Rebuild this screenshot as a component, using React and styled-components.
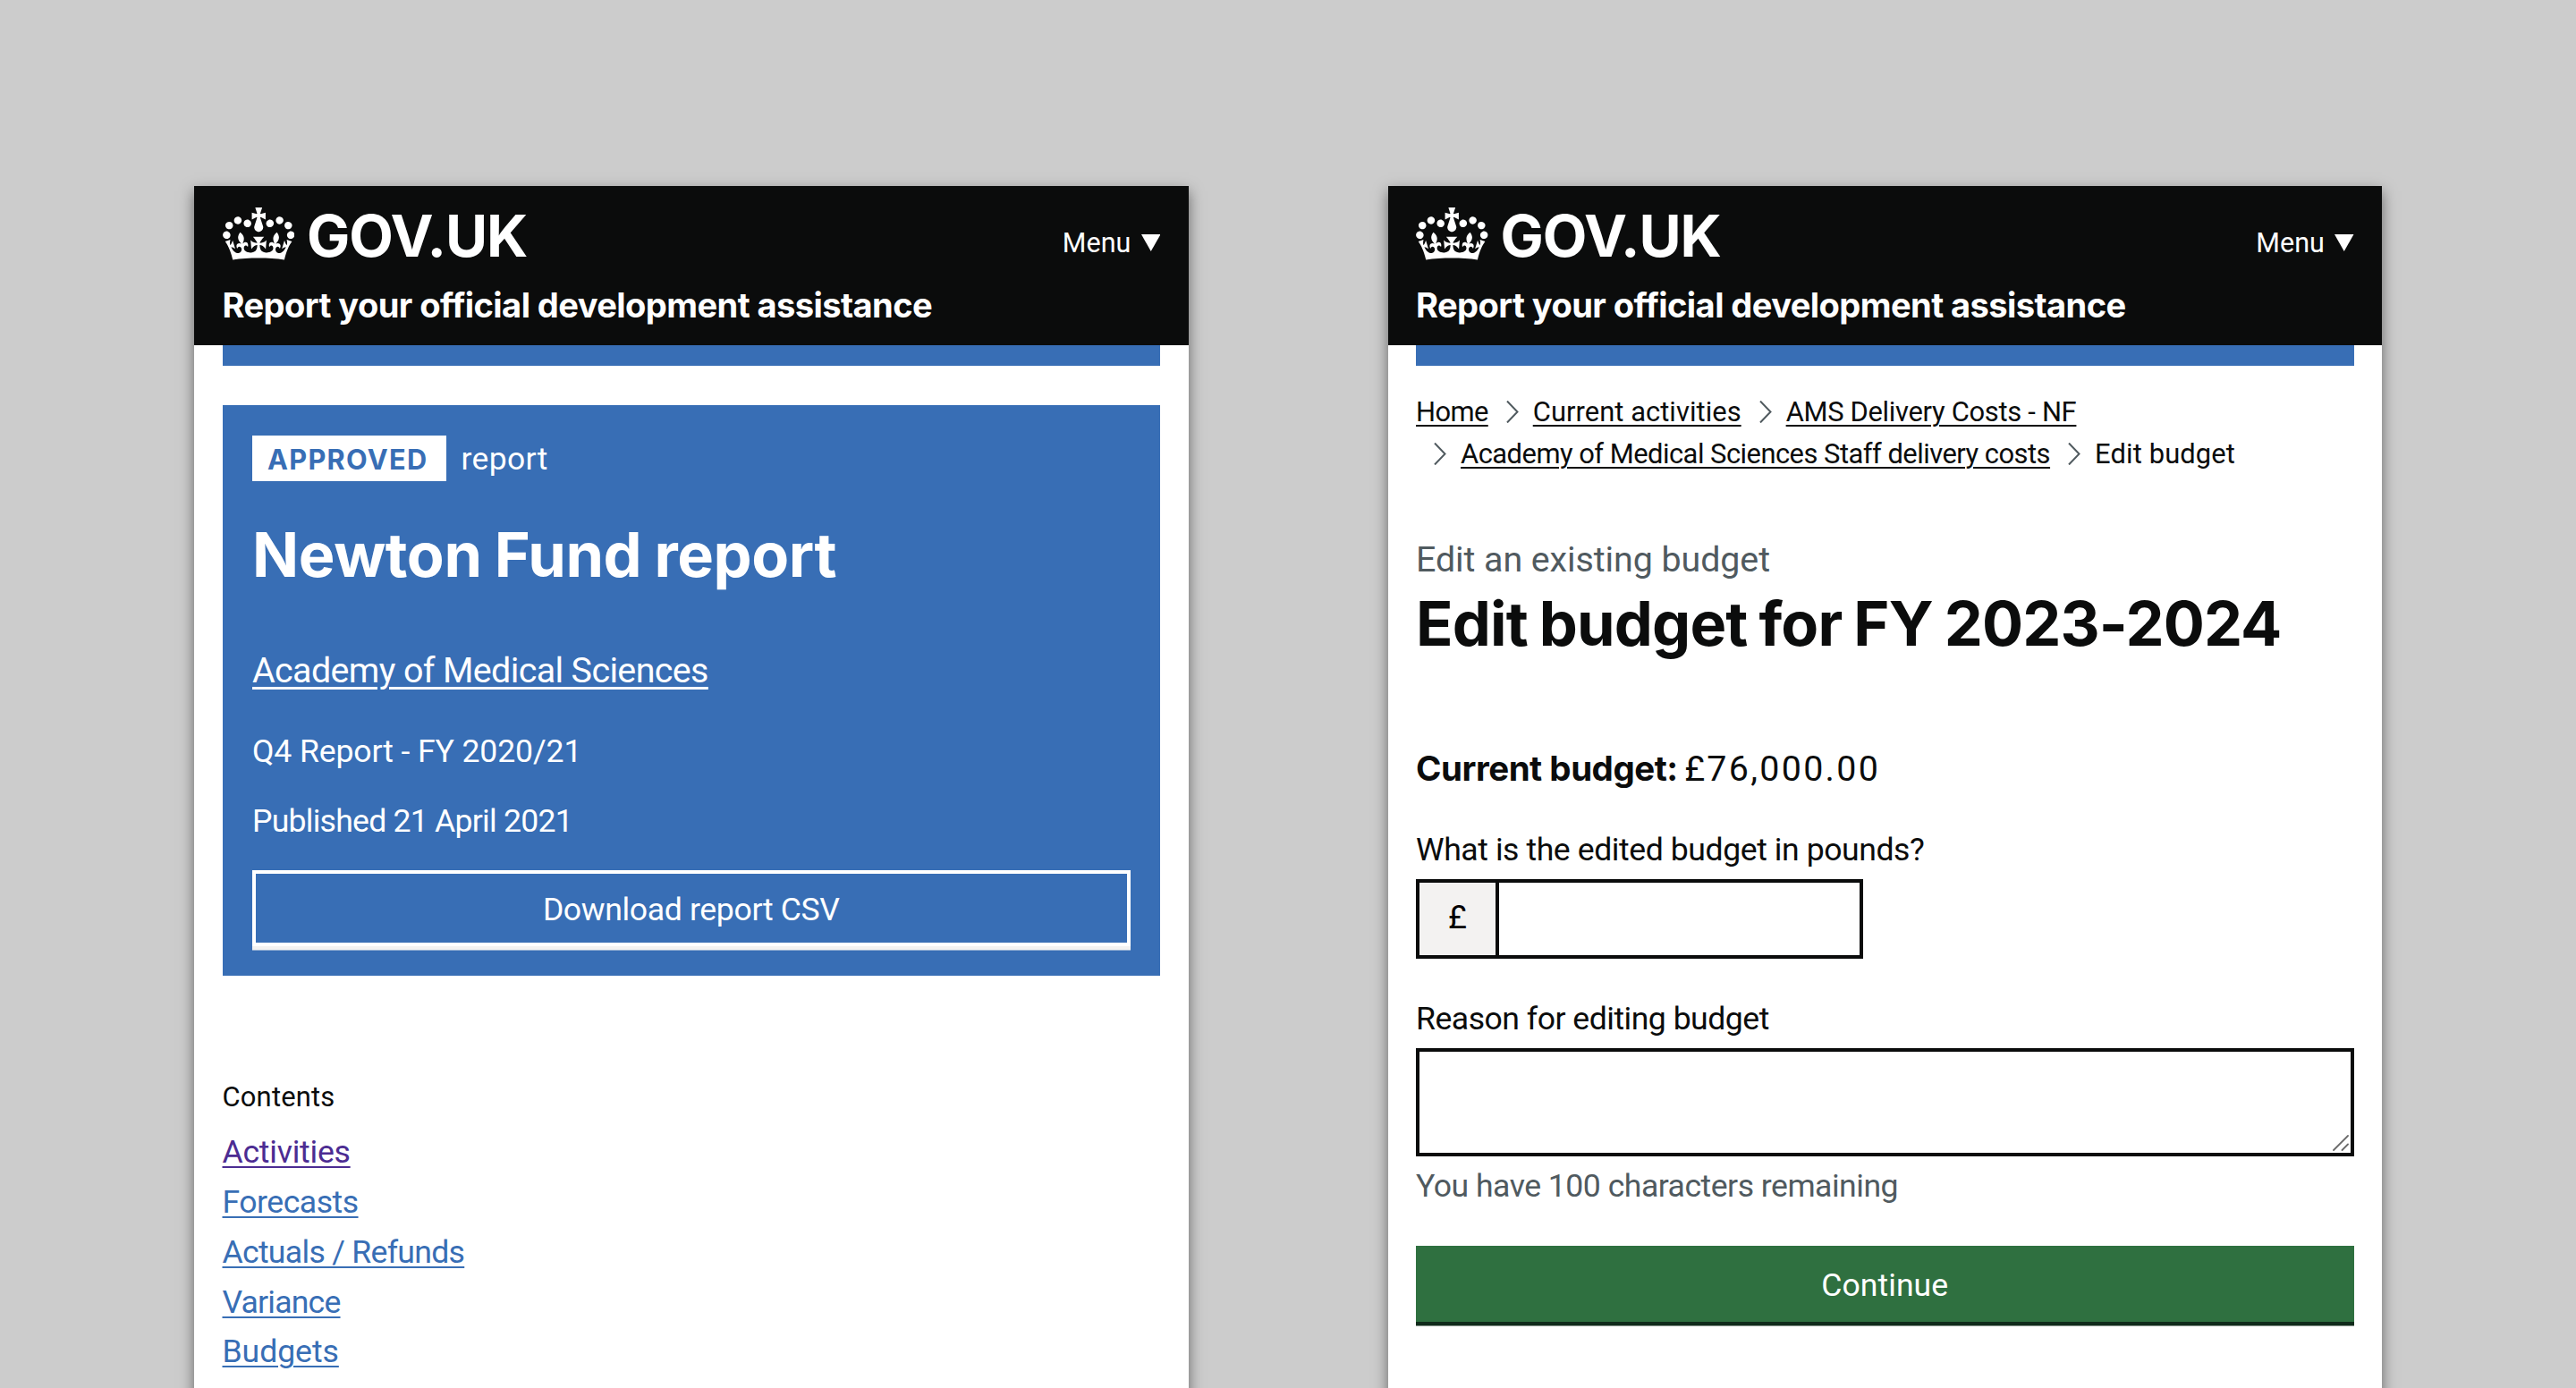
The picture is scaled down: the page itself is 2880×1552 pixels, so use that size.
import React from "react";
import styled, { createGlobalStyle } from "styled-components";

const ink = "#0b0c0c";
const blue = "#386eb5";
const muted = "#505a5f";
const regular = `"Roboto", "Liberation Sans", sans-serif`;
const bold = `"Inter", "Liberation Sans", sans-serif`;

const GlobalStyle = createGlobalStyle`
  *, *::before, *::after { box-sizing: border-box; }
  body {
    margin: 0;
    background: #cccccc;
    color: ${ink};
    font-family: ${regular};
    -webkit-font-smoothing: antialiased;
  }
  h1, p, ul, ol { margin: 0; padding: 0; font-weight: 400; }
  ul, ol { list-style: none; }
`;

const Stage = styled.main`
  display: flex;
  gap: 223px;
  width: 2880px;
  height: 1552px;
  padding: 208px 0 0 217px;
  overflow: hidden;
`;

const Screen = styled.section`
  flex: none;
  width: 1111.5px;
  height: 1600px;
  background: #ffffff;
  box-shadow: 0 6px 15px rgba(0, 0, 0, 0.5);
`;

const Header = styled.header`
  height: 178.4px;
  padding: 23px 31.5px 0;
  background: ${ink};
  color: #ffffff;
`;

const HeaderTop = styled.div`
  display: flex;
  align-items: flex-start;
  height: 59px;
`;

const Crown = styled.svg`
  display: block;
  width: 80.5px;
  height: 59px;
  margin-top: 0.5px;
  fill: currentColor;
`;

const Wordmark = styled.span`
  margin: 1px auto 0 14px;
  font: 700 64.4px/64px ${bold};
  letter-spacing: -0.95px;
`;

const MenuButton = styled.div`
  display: flex;
  align-items: center;
  gap: 11px;
  margin-top: 20.5px;
  font-size: 30.5px;
  line-height: 40px;
  letter-spacing: 0.05px;
`;

const Arrow = styled.svg`
  width: 21.5px;
  height: 19px;
  fill: currentColor;
`;

const ServiceName = styled.p`
  margin-top: 27px;
  font: 700 38.1px/48px ${bold};
  letter-spacing: -0.58px;
  white-space: nowrap;
`;

const Body = styled.div`
  padding: 0 31.5px;
`;

const PhaseStrip = styled.div`
  height: 22.2px;
  background: ${blue};
`;

const Card = styled.article`
  height: 638.2px;
  margin-top: 44.6px;
  padding: 33.5px;
  background: ${blue};
  color: #ffffff;
`;

const StatusRow = styled.div`
  display: flex;
  align-items: baseline;
  gap: 17px;
  height: 51.8px;
  font-size: 35.4px;
  letter-spacing: 0.4px;
`;

const Tag = styled.strong`
  width: 216.5px;
  height: 51.8px;
  padding-left: 17px;
  background: #ffffff;
  color: ${blue};
  font: 700 30.7px/54px ${bold};
  letter-spacing: 1.3px;
`;

const Title = styled.h1`
  margin-top: ${(p) => p.$top}px;
  font: 700 68.4px/80px ${bold};
  letter-spacing: ${(p) => p.$track}px;
  word-spacing: ${(p) => p.$word || 0}px;
  white-space: nowrap;
`;

const Text = styled.p`
  margin-top: ${(p) => p.$top}px;
  font-size: ${(p) => (p.$large ? 39.4 : p.$small ? 30.9 : 35.6)}px;
  line-height: ${(p) => (p.$large ? 52 : p.$small ? 40 : 44)}px;
  letter-spacing: ${(p) => p.$track || 0}px;
  color: ${(p) => (p.$muted ? muted : "inherit")};
  white-space: nowrap;
`;

const Link = styled.a`
  color: ${(p) => p.$color || "inherit"};
  letter-spacing: ${(p) => p.$track || 0}px;
  text-decoration: underline;
  text-decoration-thickness: ${(p) => (p.$large ? 3 : 2.4)}px;
  text-underline-offset: ${(p) => (p.$large ? 5 : 4)}px;
`;

const Button = styled.div`
  display: flex;
  align-items: center;
  justify-content: center;
  height: 85px;
  margin-top: ${(p) => p.$top}px;
  padding-top: 3px;
  border: ${(p) => (p.$outline ? "4.2px solid #ffffff" : "0")};
  background: ${(p) => (p.$outline ? blue : "#2f7040")};
  box-shadow: 0 4.5px 0 ${(p) => (p.$outline ? "#f3f2f1" : "#102b1b")};
  color: #ffffff;
  font-size: 35.6px;
  letter-spacing: ${(p) => p.$track}px;
`;

const ContentsList = styled.ul`
  margin-top: 14.2px;
  font-size: 35.6px;
  line-height: 55.8px;
`;

const Breadcrumbs = styled.ol`
  display: flex;
  flex-wrap: wrap;
  margin-top: 28.8px;
  font-size: 30.9px;
  line-height: 47px;
`;

const Crumb = styled.li`
  display: flex;
  align-items: center;
  gap: 16px;
  letter-spacing: ${(p) => p.$track}px;
  white-space: nowrap;

  & + & { margin-left: 20px; }
`;

const Chevron = styled.svg`
  width: 14px;
  height: 25px;
  fill: none;
  stroke: ${muted};
  stroke-width: 2;
`;

const Budget = styled.div`
  display: flex;
  align-items: baseline;
  gap: 7.5px;
  margin-top: 96.4px;
  font-size: 39.4px;
  line-height: 52px;
  letter-spacing: 2.3px;
`;

const BudgetLabel = styled.strong`
  font: 700 38.5px/52px ${bold};
  letter-spacing: -0.49px;
`;

const MoneyInput = styled.div`
  display: flex;
  width: 499.7px;
  height: 88.7px;
  margin-top: 11.2px;
  border: 4.3px solid ${ink};
`;

const Prefix = styled.span`
  display: flex;
  align-items: center;
  justify-content: center;
  width: 89px;
  padding-bottom: 1.5px;
  border-right: 4.3px solid ${ink};
  background: #f3f2f1;
  color: #000000;
  font-size: 36px;
`;

const TextBox = styled.div`
  display: flex;
  align-items: flex-end;
  justify-content: flex-end;
  height: 120.6px;
  margin-top: 10.8px;
  padding: 2px;
  border: 4.3px solid ${ink};
`;

const Grip = styled.svg`
  width: 18px;
  height: 18px;
  fill: none;
  stroke: #6b6b6b;
  stroke-width: 1.8;
  stroke-linecap: round;
`;

function SiteHeader() {
  return (
    <Header>
      <HeaderTop>
        <Crown viewBox="0 0 132 97">
          <path d="M25 30.2c3.5 1.5 7.7-.2 9.1-3.7 1.5-3.6-.2-7.8-3.9-9.2-3.6-1.4-7.6.3-9.1 3.9-1.4 3.5.3 7.5 3.9 9zM9 39.5c3.6 1.5 7.8-.2 9.2-3.7 1.5-3.6-.2-7.8-3.9-9.1-3.6-1.5-7.6.2-9.1 3.8-1.4 3.5.3 7.5 3.8 9zM4.4 57.2c3.5 1.5 7.7-.2 9.1-3.8 1.5-3.6-.2-7.7-3.9-9.1-3.5-1.5-7.6.3-9.1 3.8-1.4 3.5.3 7.6 3.9 9.1zm38.3-21.4c3.5 1.5 7.7-.2 9.1-3.8 1.5-3.6-.2-7.7-3.9-9.1-3.6-1.5-7.6.3-9.1 3.8-1.3 3.6.4 7.7 3.9 9.1zm64.4-5.6c-3.6 1.5-7.8-.2-9.1-3.7-1.5-3.6.2-7.8 3.8-9.2 3.6-1.4 7.7.3 9.2 3.9 1.3 3.5-.4 7.5-3.9 9zm15.9 9.3c-3.6 1.5-7.7-.2-9.1-3.7-1.5-3.6.2-7.8 3.7-9.1 3.6-1.5 7.7.2 9.2 3.8 1.5 3.5-.3 7.5-3.8 9zm4.7 17.7c-3.6 1.5-7.8-.2-9.2-3.8-1.5-3.6.2-7.7 3.9-9.1 3.6-1.5 7.7.3 9.2 3.8 1.3 3.5-.4 7.6-3.9 9.1zM89.3 35.8c-3.6 1.5-7.8-.2-9.2-3.8-1.4-3.6.2-7.7 3.9-9.1 3.6-1.5 7.7.3 9.2 3.8 1.4 3.6-.3 7.7-3.9 9.1zM69.7 17.7l8.9 4.7V9.3l-8.9 2.8c-.2-.3-.5-.6-.9-.9L72.4 0H59.6l3.5 11.2c-.3.3-.6.5-.9.9l-8.8-2.8v13.1l8.8-4.7c.3.3.6.7.9.9l-5 15.4v.1c-.2.8-.4 1.6-.4 2.4 0 4.1 3.1 7.5 7 8.1h.2c.3 0 .7.1 1 .1.4 0 .7 0 1-.1h.2c4-.6 7.1-4.1 7.1-8.1 0-.8-.1-1.7-.4-2.4V34l-5.1-15.4c.4-.2.7-.6 1-.9zM66 92.8c16.9 0 32.8 1.1 47.1 3.2 4-16.9 8.9-26.7 14-33.5l-9.6-3.4c1 4.9 1.1 7.2 0 10.2-1.5-1.4-3-4.3-4.2-8.7L108.6 76c2.8-2 5-3.2 7.5-3.3-4.4 9.4-10 11.9-13.6 11.2-4.3-.8-6.3-4.6-5.6-7.9 1-4.7 5.7-5.9 8-.5 4.3-8.7-3-11.4-7.6-8.8 7.1-7.2 7.9-13.5 2.1-21.1-8 6.1-8.1 12.3-4.5 20.8-4.7-5.4-12.1-2.5-9.5 6.2 3.4-5.2 7.9-2 7.2 3.1-.6 4.3-6.4 7.8-13.5 7.2-10.3-.9-10.9-8-11.2-13.8 2.5-.5 7.1 1.8 11 7.3L80.2 60c-4.1 4.4-8 5.3-12.3 5.4 1.4-4.4 8-11.6 8-11.6H55.5s6.4 7.2 7.9 11.6c-4.2-.1-8-1-12.3-5.4l1.4 16.4c3.9-5.5 8.5-7.7 10.9-7.3-.3 5.8-.9 12.8-11.1 13.8-7.2.6-12.9-2.9-13.5-7.2-.7-5 3.8-8.3 7.1-3.1 2.7-8.7-4.6-11.6-9.4-6.2 3.7-8.5 3.6-14.7-4.6-20.8-5.8 7.6-5 13.9 2.2 21.1-4.7-2.6-11.9.1-7.7 8.8 2.3-5.5 7.1-4.2 8.1.5.7 3.3-1.3 7.1-5.7 7.9-3.5.7-9-1.8-13.5-11.2 2.5.1 4.7 1.3 7.5 3.3l-4.7-15.4c-1.2 4.4-2.7 7.2-4.3 8.7-1.1-3-.9-5.3 0-10.2l-9.5 3.4c5 6.9 9.9 16.7 14 33.5 14.8-2.1 30.8-3.2 47.7-3.2z" />
        </Crown>
        <Wordmark>GOV.UK</Wordmark>
        <MenuButton>
          Menu
          <Arrow viewBox="0 0 21.5 19">
            <path d="M0 0h21.5L10.75 19z" />
          </Arrow>
        </MenuButton>
      </HeaderTop>
      <ServiceName>Report your official development assistance</ServiceName>
    </Header>
  );
}

const contents = [
  { label: "Activities", color: "#4c2c92", track: -0.24 },
  { label: "Forecasts", track: -0.5 },
  { label: "Actuals / Refunds", track: -0.7 },
  { label: "Variance", track: -0.8 },
  { label: "Budgets", track: -0.05 },
];

const crumbs = [
  { label: "Home", track: -0.6, link: true },
  { label: "Current activities", track: 0.05, link: true },
  { label: "AMS Delivery Costs - NF", track: -0.3, link: true },
  { label: "Academy of Medical Sciences Staff delivery costs", track: -0.51, link: true },
  { label: "Edit budget", track: 0.13 },
];

function ReportScreen() {
  return (
    <Screen>
      <SiteHeader />
      <Body>
        <PhaseStrip />
        <Card>
          <StatusRow>
            <Tag>APPROVED</Tag>
            report
          </StatusRow>
          <Title $top={42} $track={-0.4} $word={-1.6}>Newton Fund report</Title>
          <Text $large $top={64} $track={-0.61}>
            <Link $large $track={-0.61}>Academy of Medical Sciences</Link>
          </Text>
          <Text $top={41.2} $track={-0.12}>Q4 Report - FY 2020/21</Text>
          <Text $top={34} $track={-0.75}>Published 21 April 2021</Text>
          <Button $outline $top={33.2} $track={-0.35}>Download report CSV</Button>
        </Card>
        <Text $small $top={115.7} $track={0.2}>Contents</Text>
        <ContentsList>
          {contents.map((c) => (
            <li key={c.label}>
              <Link $color={c.color || blue} $track={c.track}>{c.label}</Link>
            </li>
          ))}
        </ContentsList>
      </Body>
    </Screen>
  );
}

function BudgetScreen() {
  return (
    <Screen>
      <SiteHeader />
      <Body>
        <PhaseStrip />
        <Breadcrumbs>
          {crumbs.map((c, i) => (
            <Crumb key={c.label} $track={c.track}>
              {i > 0 && (
                <Chevron viewBox="0 0 14 25">
                  <path d="M1 0.5L12.5 12.5L1 24.5" />
                </Chevron>
              )}
              {c.link ? <Link $track={c.track}>{c.label}</Link> : c.label}
            </Crumb>
          ))}
        </Breadcrumbs>
        <Text $large $muted $top={68.6} $track={-0.08}>Edit an existing budget</Text>
        <Title $top={5} $track={-0.85} $word={-2.4}>Edit budget for FY 2023-2024</Title>
        <Budget>
          <BudgetLabel>Current budget:</BudgetLabel>
          £76,000.00
        </Budget>
        <Text $top={41.3} $track={-0.42}>What is the edited budget in pounds?</Text>
        <MoneyInput>
          <Prefix>£</Prefix>
        </MoneyInput>
        <Text $top={45.8} $track={-0.5}>Reason for editing budget</Text>
        <TextBox>
          <Grip viewBox="0 0 18 18">
            <path d="M1 17L17 1M10.5 17L17 10.5" />
          </Grip>
        </TextBox>
        <Text $muted $top={11.6} $track={-0.5}>You have 100 characters remaining</Text>
        <Button $top={45} $track={0.05}>Continue</Button>
      </Body>
    </Screen>
  );
}

export default function App() {
  return (
    <>
      <GlobalStyle />
      <Stage>
        <ReportScreen />
        <BudgetScreen />
      </Stage>
    </>
  );
}
